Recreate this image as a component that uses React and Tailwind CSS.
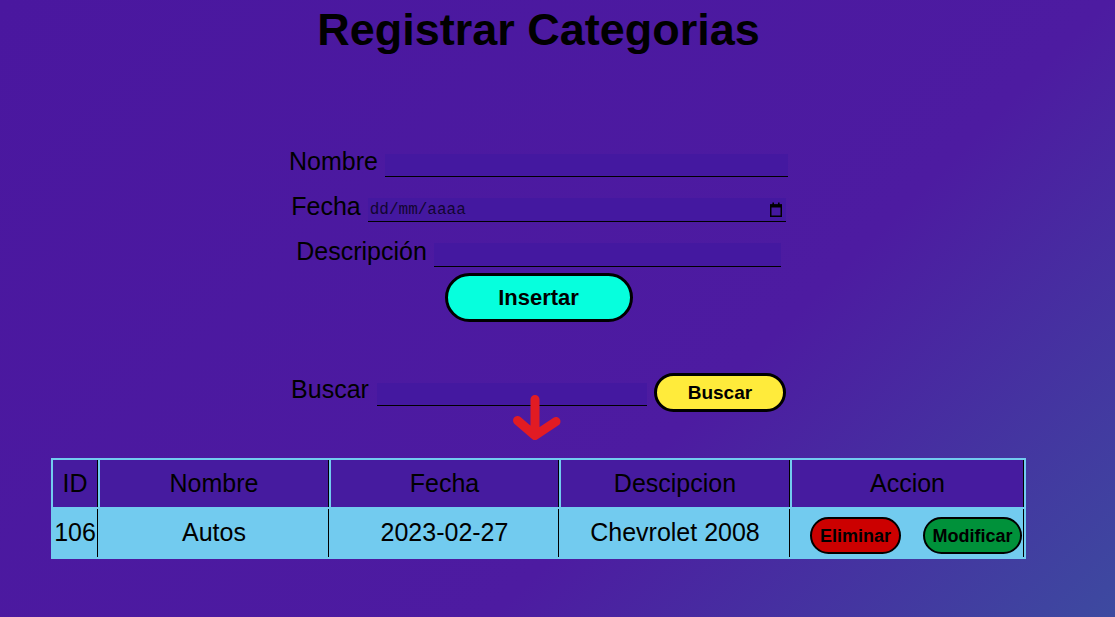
import React from "react";

function CalendarIcon() {
  return (
    <svg width="12" height="15" viewBox="0 0 12 15" className="block">
      <rect x="0.75" y="3" width="10.5" height="11.25" fill="none" stroke="#000" strokeWidth="1.5" />
      <rect x="0" y="2.5" width="12" height="3" fill="#000" />
      <rect x="2.4" y="0.5" width="1.6" height="3" fill="#000" />
      <rect x="8" y="0.5" width="1.6" height="3" fill="#000" />
    </svg>
  );
}

function Arrow() {
  return (
    <svg
      width="60"
      height="58"
      viewBox="0 0 60 58"
      className="absolute left-[505px] top-[388px] pointer-events-none"
    >
      <path
        d="M30 11.5 L30 47 M12.5 32.5 L30 47.5 L51 33.5"
        fill="none"
        stroke="#e21b23"
        strokeWidth="9"
        strokeLinecap="round"
        strokeLinejoin="round"
      />
    </svg>
  );
}

export default function App() {
  const headers = ["ID", "Nombre", "Fecha", "Descipcion", "Accion"];
  return (
    <div className="min-h-screen w-full bg-[linear-gradient(135deg,#4a179f_0%,#4d1ba1_64%,#3d4aa0_100%)] font-['Liberation_Sans',Arial,sans-serif] text-black">
      <div className="relative w-[1077px] flex flex-col items-center">
        <h1 className="mt-[4px] h-[52px] leading-[52px] text-[45px] font-bold whitespace-nowrap">
          Registrar Categorias
        </h1>

        {/* Nombre */}
        <div className="mt-[91px] flex items-end gap-[7px]">
          <span className="text-[25px] leading-[28px] mb-[2px]">Nombre</span>
          <div className="w-[403px] h-[23px] bg-[#4418a0] border-b border-black"></div>
        </div>

        {/* Fecha */}
        <div className="mt-[15px] flex items-end gap-[7px]">
          <span className="text-[25px] leading-[28px] mb-[2px]">Fecha</span>
          <div className="w-[418px] h-[24px] bg-[#4418a0] border-b border-black flex items-start justify-between pl-[2px] pr-[4px]">
            <span className="font-['Liberation_Mono',monospace] text-[16px] leading-[21px] pt-[2px] text-[#120630]">
              dd/mm/aaaa
            </span>
            <span className="pt-[4px]">
              <CalendarIcon />
            </span>
          </div>
        </div>

        {/* Descripcion */}
        <div className="mt-[15px] flex items-end gap-[7px]">
          <span className="text-[25px] leading-[28px] mb-[2px]">Descripción</span>
          <div className="w-[347px] h-[24px] bg-[#4418a0] border-b border-black"></div>
        </div>

        <button className="mt-[6px] w-[188px] h-[49px] border-[3px] border-black rounded-full bg-[#06ffdd] text-[22px] font-bold leading-none">
          Insertar
        </button>

        {/* Buscar */}
        <div className="mt-[51px] flex items-start">
          <span className="mt-[2px] text-[25px] leading-[28px]">Buscar</span>
          <div className="ml-[8px] mt-[10px] w-[270px] h-[23px] bg-[#4418a0] border-b border-black"></div>
          <button className="ml-[7px] w-[132px] h-[39px] border-[3px] border-black rounded-full bg-[#ffeb3b] text-[19px] font-bold leading-none">
            Buscar
          </button>
        </div>

        {/* Table */}
        <div className="mt-[46px] grid grid-cols-[45px_229px_228px_229px_232px] gap-[2px] p-[2px] bg-[#72cbef] text-[25px]">
          {headers.map((h) => (
            <div
              key={h}
              className="h-[47px] bg-[#461b9f] border-r border-black flex items-center justify-center"
            >
              {h}
            </div>
          ))}
          <div className="h-[48px] border-r border-black flex items-center justify-center">106</div>
          <div className="h-[48px] border-r border-black flex items-center justify-center">Autos</div>
          <div className="h-[48px] border-r border-black flex items-center justify-center">2023-02-27</div>
          <div className="h-[48px] border-r border-black flex items-center justify-center">Chevrolet 2008</div>
          <div className="h-[48px] border-r border-black flex items-center pl-[18px] gap-[22px]">
            <button className="mt-[5px] w-[91px] h-[37px] shrink-0 border-2 border-black rounded-full bg-[#cc0000] text-[18px] font-bold leading-none">
              Eliminar
            </button>
            <button className="mt-[5px] w-[99px] h-[37px] shrink-0 border-2 border-black rounded-full bg-[#00913a] text-[18px] font-bold leading-none">
              Modificar
            </button>
          </div>
        </div>

        <Arrow />
      </div>
    </div>
  );
}
